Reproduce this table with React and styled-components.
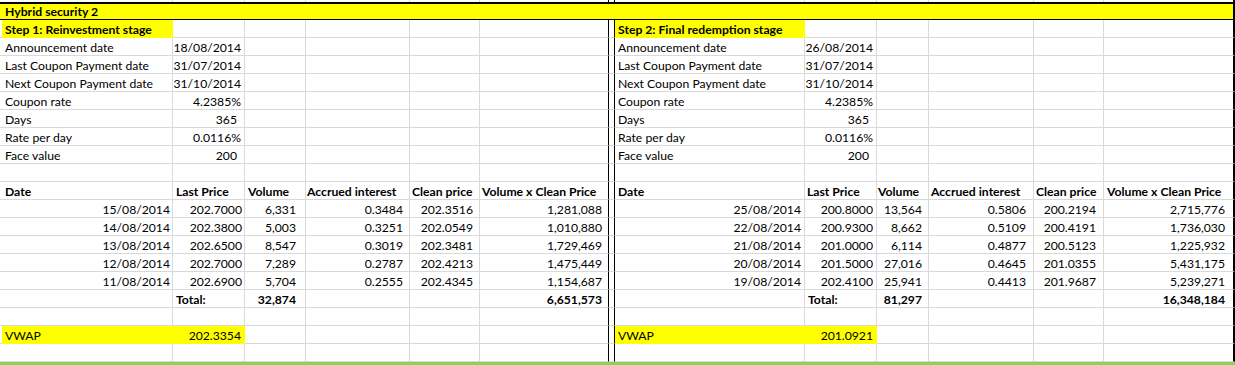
import React from "react";
import styled, { createGlobalStyle } from "styled-components";

const GRID = "#d9d9d9";
const YELLOW = "#ffff00";

const GlobalStyle = createGlobalStyle`
  html, body {
    margin: 0;
    padding: 0;
    background: #ffffff;
  }
  body {
    font-family: Lato, "Liberation Sans", Arial, sans-serif;
    color: #000000;
  }
`;

const Page = styled.div`
  width: 1235px;
  height: 365px;
  overflow: hidden;
  display: flex;
  flex-direction: column;
`;

const Sheet = styled.div`
  display: grid;
  grid-template-columns: 2px 171px 72px 61px 104px 70px 128px 7px 190px 72px 52px 105px 70px 131px;
  grid-template-rows: 2px repeat(20, 18px);
`;

const Cell = styled.div`
  box-sizing: border-box;
  display: flex;
  align-items: flex-end;
  justify-content: ${(p) => (p.$align === "r" ? "flex-end" : "flex-start")};
  padding-left: ${(p) => (p.$align === "r" ? 0 : p.$pl ?? 3)}px;
  padding-right: ${(p) => (p.$align === "r" ? p.$pr ?? 3 : 0)}px;
  padding-bottom: 1px;
  font-size: 12.2px;
  font-weight: ${(p) => (p.$bold ? 700 : 400)};
  line-height: 13px;
  white-space: nowrap;
  background: ${(p) => (p.$fill ? YELLOW : "transparent")};
  border-bottom: ${(p) => (p.$strip ? "none" : `1px solid ${p.$fill ? YELLOW : GRID}`)};
  border-right: ${(p) =>
    p.$edge
      ? "2px solid #000"
      : p.$open
      ? "none"
      : `1px solid ${p.$fill ? YELLOW : GRID}`};
`;

const Divider = styled.div`
  box-sizing: border-box;
  border-left: 1px solid #000;
  border-right: 1px solid #000;
  border-bottom: ${(p) => (p.$strip ? "none" : `1px solid ${GRID}`)};
`;

const Title = styled.div`
  grid-column: 1 / -1;
  box-sizing: border-box;
  background: ${YELLOW};
  border-top: 2px solid #000;
  border-bottom: 1px solid #000;
  border-right: 2px solid #000;
  display: flex;
  align-items: flex-end;
  padding-left: 5px;
  padding-bottom: 1px;
  font-size: 12.2px;
  font-weight: 700;
  line-height: 13px;
`;

const GreenRule = styled.div`
  height: 3px;
  background: #92d050;
`;

const empty = [null, null, null, null, null, null];

const info = [
  ["Announcement date", "18/08/2014", "26/08/2014", 3],
  ["Last Coupon Payment date", "31/07/2014", "31/07/2014", 3],
  ["Next Coupon Payment date", "31/10/2014", "31/10/2014", 3],
  ["Coupon rate", "4.2385%", "4.2385%", 3],
  ["Days", "365", "365", 7],
  ["Rate per day", "0.0116%", "0.0116%", 3],
  ["Face value", "200", "200", 7],
];

const leftData = [
  ["15/08/2014", "202.7000", "6,331", "0.3484", "202.3516", "1,281,088"],
  ["14/08/2014", "202.3800", "5,003", "0.3251", "202.0549", "1,010,880"],
  ["13/08/2014", "202.6500", "8,547", "0.3019", "202.3481", "1,729,469"],
  ["12/08/2014", "202.7000", "7,289", "0.2787", "202.4213", "1,475,449"],
  ["11/08/2014", "202.6900", "5,704", "0.2555", "202.4345", "1,154,687"],
];

const rightData = [
  ["25/08/2014", "200.8000", "13,564", "0.5806", "200.2194", "2,715,776"],
  ["22/08/2014", "200.9300", "8,662", "0.5109", "200.4191", "1,736,030"],
  ["21/08/2014", "201.0000", "6,114", "0.4877", "200.5123", "1,225,932"],
  ["20/08/2014", "201.5000", "27,016", "0.4645", "201.0355", "5,431,175"],
  ["19/08/2014", "202.4100", "25,941", "0.4413", "201.9687", "5,239,271"],
];

const leftPad = [2, 2, 9, 6, 6, 6];
const rightPad = [3, 3, 6, 7, 7, 8];

const headers = ["Date", "Last Price", "Volume", "Accrued interest", "Clean price", "Volume x Clean Price"];

const numRow = (vals, pads) => vals.map((t, i) => ({ t, a: "r", pr: pads[i] }));

const headRow = (pls) => headers.map((t, i) => ({ t, b: true, pl: pls[i] }));

const rows = [
  {
    left: [{ t: "Step 1: Reinvestment stage", b: true, y: true }, null, null, null, null, null],
    right: [{ t: "Step 2: Final redemption stage", b: true, y: true }, null, null, null, null, null],
  },
  ...info.map(([label, l, r, pr]) => ({
    left: [{ t: label }, { t: l, a: "r", pr }, null, null, null, null],
    right: [{ t: label }, { t: r, a: "r", pr }, null, null, null, null],
  })),
  { left: empty, right: empty },
  { left: headRow([3, 3, 3, 1, 2, 2]), right: headRow([3, 2, 1, 2, 2, 3]) },
  ...leftData.map((vals, i) => ({
    left: numRow(vals, leftPad),
    right: numRow(rightData[i], rightPad),
  })),
  {
    left: [null, { t: "Total:", b: true }, { t: "32,874", b: true, a: "r", pr: 9 }, null, null, { t: "6,651,573", b: true, a: "r", pr: 6 }],
    right: [null, { t: "Total:", b: true }, { t: "81,297", b: true, a: "r", pr: 6 }, null, null, { t: "16,348,184", b: true, a: "r", pr: 8 }],
  },
  { left: empty, right: empty },
  {
    left: [{ t: "VWAP", y: true }, { t: "202.3354", a: "r", pr: 3, y: true }, null, null, null, null],
    right: [{ t: "VWAP", y: true }, { t: "201.0921", a: "r", pr: 3, y: true }, null, null, null, null],
  },
  { left: empty, right: empty },
];

function SideCells({ cells, side, rowKey }) {
  return cells.map((c, i) => {
    const spec = c || {};
    return (
      <Cell
        key={`${rowKey}-${side}-${i}`}
        $align={spec.a}
        $bold={spec.b}
        $pr={spec.pr}
        $pl={spec.pl}
        $fill={spec.y}
        $open={side === "l" && i === 5}
        $edge={side === "r" && i === 5}
      >
        {spec.t}
      </Cell>
    );
  });
}

function SheetRow({ row, idx }) {
  return (
    <>
      <Cell $open />
      <SideCells cells={row.left} side="l" rowKey={idx} />
      <Divider />
      <SideCells cells={row.right} side="r" rowKey={idx} />
    </>
  );
}

function TopStrip() {
  return (
    <>
      <Cell $strip $open />
      {empty.map((_, i) => (
        <Cell key={`sl${i}`} $strip $open={i === 5} />
      ))}
      <Divider $strip />
      {empty.map((_, i) => (
        <Cell key={`sr${i}`} $strip $edge={i === 5} />
      ))}
    </>
  );
}

export default function App() {
  return (
    <Page>
      <GlobalStyle />
      <Sheet>
        <TopStrip />
        <Title>Hybrid security 2</Title>
        {rows.map((row, idx) => (
          <SheetRow key={idx} row={row} idx={idx} />
        ))}
      </Sheet>
      <GreenRule />
    </Page>
  );
}
